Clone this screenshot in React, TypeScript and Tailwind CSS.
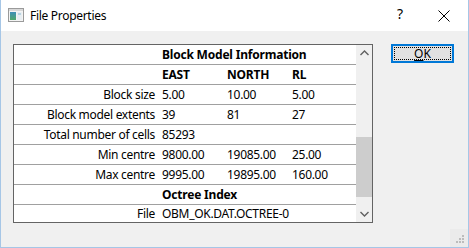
import React from "react";

const font = { fontFamily: '"Noto Sans", "Open Sans", sans-serif' };

type Row =
  | { kind: "head"; text: string }
  | { kind: "cols"; cells: string[] }
  | { kind: "data"; label: string; cells: string[] };

const rows: Row[] = [
  { kind: "head", text: "Block Model Information" },
  { kind: "cols", cells: ["EAST", "NORTH", "RL"] },
  { kind: "data", label: "Block size", cells: ["5.00", "10.00", "5.00"] },
  { kind: "data", label: "Block model extents", cells: ["39", "81", "27"] },
  { kind: "data", label: "Total number of cells", cells: ["85293", "", ""] },
  { kind: "data", label: "Min centre", cells: ["9800.00", "19085.00", "25.00"] },
  { kind: "data", label: "Max centre", cells: ["9995.00", "19895.00", "160.00"] },
  { kind: "head", text: "Octree Index" },
  { kind: "data", label: "File", cells: ["OBM_OK.DAT.OCTREE-0"] },
];

function TableRow({ row, last }: { row: Row; last: boolean }) {
  const base =
    "flex items-center text-[12px] leading-none tracking-[-0.3px] text-black " +
    (last ? "h-[17px]" : "h-[20px] border-b border-[#a0a0a0]");
  if (row.kind === "head") {
    return (
      <div className={base}>
        <div className="w-[144px] shrink-0" />
        <div className="pl-[4px] font-bold tracking-[-0.2px]">{row.text}</div>
      </div>
    );
  }
  if (row.kind === "cols") {
    return (
      <div className={base}>
        <div className="w-[144px] shrink-0" />
        {row.cells.map((c, i) => (
          <div key={i} className="w-[65px] shrink-0 pl-[4px] font-bold tracking-[-0.2px]">
            {c}
          </div>
        ))}
      </div>
    );
  }
  return (
    <div className={base}>
      <div className="w-[144px] shrink-0 pr-[3px] text-right whitespace-nowrap">{row.label}</div>
      {row.cells.length === 1 ? (
        <div className="pl-[4px] whitespace-nowrap">{row.cells[0]}</div>
      ) : (
        row.cells.map((c, i) => (
          <div key={i} className="w-[65px] shrink-0 pl-[4px] whitespace-nowrap">
            {c}
          </div>
        ))
      )}
    </div>
  );
}

export default function App() {
  return (
    <div
      className="w-[469px] h-[248px] flex flex-col border-l border-r border-b border-[#a6c6e6] bg-white overflow-hidden"
      style={font}
    >
      {/* Title bar */}
      <div className="h-[31px] shrink-0 flex items-center bg-white relative">
        <svg width="16" height="14" viewBox="0 0 16 14" className="ml-[7px] mt-[-1px]">
          <rect x="0.5" y="0.5" width="15" height="13" fill="#f4f4f4" stroke="#9a9a9a" />
          <rect x="1" y="1" width="14" height="2" fill="#d8d8d8" />
          <defs>
            <linearGradient id="g1" x1="0" y1="0" x2="0" y2="1">
              <stop offset="0" stopColor="#3f8fb8" />
              <stop offset="1" stopColor="#4fa86a" />
            </linearGradient>
          </defs>
          <rect x="2" y="4" width="6" height="8" fill="url(#g1)" />
          <rect x="9" y="4" width="5" height="8" fill="#e8eef2" />
          <rect x="10" y="5" width="3" height="2" fill="#b9d4e2" />
        </svg>
        <span className="ml-[6px] text-[12px] tracking-[-0.3px] text-black leading-none">File Properties</span>
        <span className="absolute left-[396px] top-[7px] text-[14px] leading-none text-black">?</span>
        <svg width="12" height="12" viewBox="0 0 12 12" className="absolute left-[437px] top-[10px]">
          <path d="M0.5 0.5 L11.5 11.5 M11.5 0.5 L0.5 11.5" stroke="#000" strokeWidth="1" />
        </svg>
      </div>

      {/* Client area */}
      <div className="flex-1 bg-[#f0f0f0] relative flex items-start pl-[12px] pt-[13px]">
        {/* Table box */}
        <div className="w-[360px] h-[179px] border border-[#646464] bg-white flex">
          <div className="w-[342px] flex flex-col">
            {rows.map((r, i) => (
              <TableRow key={i} row={r} last={i === rows.length - 1} />
            ))}
          </div>
          {/* Scrollbar */}
          <div className="w-[16px] bg-[#f0f0f0] flex flex-col">
            <div className="h-[16px] flex items-center justify-center">
              <svg width="9" height="6" viewBox="0 0 9 6">
                <path d="M0.5 5 L4.5 1 L8.5 5" fill="none" stroke="#606060" strokeWidth="1.4" />
              </svg>
            </div>
            <div className="flex-1 flex flex-col">
              <div className="h-[76px]" />
              <div className="h-[60px] bg-[#cdcdcd]" />
            </div>
            <div className="h-[16px] flex items-center justify-center">
              <svg width="9" height="6" viewBox="0 0 9 6">
                <path d="M0.5 1 L4.5 5 L8.5 1" fill="none" stroke="#606060" strokeWidth="1.4" />
              </svg>
            </div>
          </div>
        </div>

        {/* OK button */}
        <button className="ml-[18px] w-[63px] h-[19px] border-2 border-[#0078d7] bg-[#e1e1e1] relative flex items-center justify-center text-[12px] leading-none text-black">
          <span className="absolute inset-[1px] border border-dotted border-black" />
          <span>
            <span className="underline underline-offset-2">O</span>K
          </span>
        </button>

        {/* Resize grip */}
        <div className="absolute right-0 bottom-0 w-[18px] h-[18px] bg-[#ebebeb]">
          <svg width="18" height="18" viewBox="0 0 18 18">
            <rect x="12" y="6" width="2" height="2" fill="#bcbcbc" />
            <rect x="9" y="9" width="2" height="2" fill="#bcbcbc" />
            <rect x="12" y="9" width="2" height="2" fill="#bcbcbc" />
            <rect x="6" y="12" width="2" height="2" fill="#bcbcbc" />
            <rect x="9" y="12" width="2" height="2" fill="#bcbcbc" />
            <rect x="12" y="12" width="2" height="2" fill="#bcbcbc" />
          </svg>
        </div>
      </div>
    </div>
  );
}
